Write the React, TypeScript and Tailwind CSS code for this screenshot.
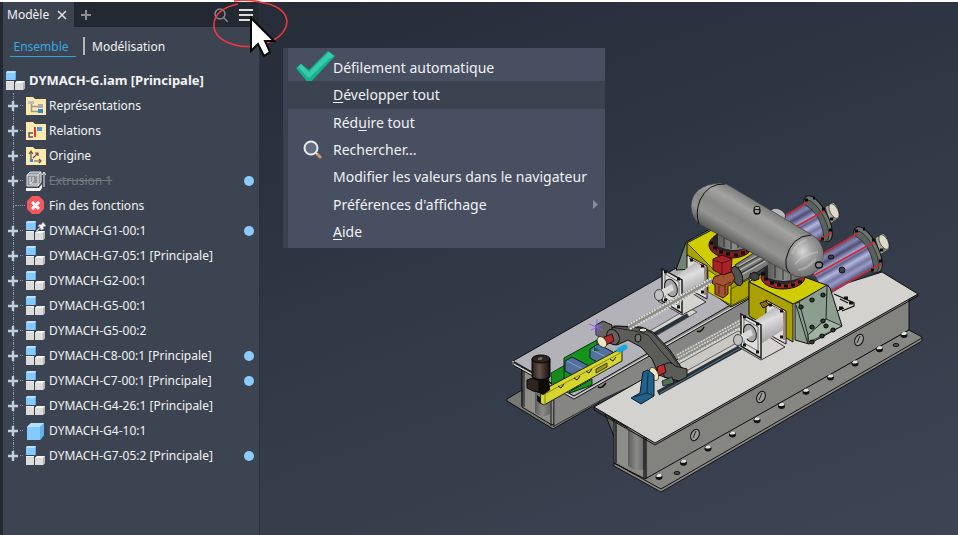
import { useState } from 'react';
import type { ReactNode } from 'react';

type IconKind = 'views' | 'relations' | 'origin' | 'extrusion' | 'end' | 'pinned' | 'assembly' | 'part';

type TreeNode = {
  label: string;
  icon: IconKind;
  dot?: boolean;
  leaf?: boolean;
  disabled?: boolean;
};

const nodes: TreeNode[] = [
  { label: 'Représentations', icon: 'views' },
  { label: 'Relations', icon: 'relations' },
  { label: 'Origine', icon: 'origin' },
  { label: 'Extrusion 1', icon: 'extrusion', dot: true, disabled: true },
  { label: 'Fin des fonctions', icon: 'end', leaf: true },
  { label: 'DYMACH-G1-00:1', icon: 'pinned', dot: true },
  { label: 'DYMACH-G7-05:1 [Principale]', icon: 'assembly' },
  { label: 'DYMACH-G2-00:1', icon: 'assembly' },
  { label: 'DYMACH-G5-00:1', icon: 'assembly' },
  { label: 'DYMACH-G5-00:2', icon: 'assembly' },
  { label: 'DYMACH-C8-00:1 [Principale]', icon: 'assembly', dot: true },
  { label: 'DYMACH-C7-00:1 [Principale]', icon: 'assembly', dot: true },
  { label: 'DYMACH-G4-26:1 [Principale]', icon: 'assembly' },
  { label: 'DYMACH-G4-10:1', icon: 'part' },
  { label: 'DYMACH-G7-05:2 [Principale]', icon: 'assembly', dot: true },
];

function Cubes() {
  return (
    <>
      <path d="M0 2 1 0h9v8l-1 1H0z" fill="#84caff" />
      <path d="M0 2 1 0h9L9 2z" fill="#b9e1ff" />
      <path d="M9 2l1-2v8l-1 1z" fill="#5caeea" />
      <path d="M0 11h8v8H0z" fill="#dcdcdc" />
      <path d="M0 10h8v1H0z" fill="#f4f4f4" />
      <path d="M9 12l2-2h8v7l-2 2H9z" fill="#dcdcdc" />
      <path d="M9 12l2-2h8l-2 2z" fill="#f8f8f8" />
      <path d="M17 12l2-2v7l-2 2z" fill="#b4b4b4" />
    </>
  );
}

function Folder({ children }: { children: ReactNode }) {
  return (
    <>
      <path d="M0 1h7l2 2h11v16H0z" fill="#fde9ae" />
      {children}
    </>
  );
}

function NodeIcon({ kind }: { kind: IconKind }) {
  return (
    <svg width="20" height="20" viewBox="0 0 20 20" className="shrink-0" aria-hidden="true">
      {kind === 'views' && (
        <Folder>
          <path d="M5.5 7v8.500H12M5.500 10.500H12" fill="none" stroke="#9a988e" strokeWidth="1.5" />
          <path d="M2 5h6v3H2z" fill="#b9bcc4" />
          <path d="M12 8h5v4h-5z" fill="#a7abb5" />
          <path d="M12 13h5v4h-5z" fill="#2f86cf" />
        </Folder>
      )}
      {kind === 'relations' && (
        <Folder>
          <path d="M8 6h2v10H8z" fill="#e23b33" />
          <path d="M11 6h5v4h-5z" fill="#3f94da" />
          <path d="M7 12H3v4h4" fill="none" stroke="#55585e" strokeWidth="1.5" />
        </Folder>
      )}
      {kind === 'origin' && (
        <Folder>
          <path d="M5 13V6M3 8l2-3 2 3M7 12l5-5M9 7h3v3M8 15h7M13 13l2 2-2 2" fill="none" stroke="#5f594b" strokeWidth="1.2" />
          <path d="M4 13h3v3H4z" fill="#2390e0" />
        </Folder>
      )}
      {kind === 'extrusion' && (
        <>
          <path d="M1 4 4 1h11v10l-3 4H1z" fill="#8f949c" stroke="#e2e2e2" />
          <path d="M1 4h11v11M12 4l3-3M4 6v7h7M4 13l3-3V6" fill="none" stroke="#e8e8e8" />
          <path d="M0 17h13l3-4v4l-2 3H0z" fill="#f5f5f5" />
          <path d="M18 16V2M16 4l2-3 2 3" fill="none" stroke="#ececec" />
        </>
      )}
      {kind === 'end' && (
        <>
          <path d="M6 0h7l5 5v8l-5 5H6l-5-5V5z" fill="#f4585c" />
          <path d="M6 6l7 7M13 6l-7 7" stroke="#fff" strokeWidth="3" />
        </>
      )}
      {kind === 'assembly' && <Cubes />}
      {kind === 'pinned' && (
        <>
          <Cubes />
          <path d="M10 10l4-4-2-1 2-2 1 1 2-3 3 4-3 1 1 2-3 1-1-2-3 4z" fill="#f1f1f1" stroke="#8d939c" strokeWidth="0.5" />
        </>
      )}
      {kind === 'part' && (
        <>
          <path d="M1 6l4-4h13v12l-4 5H1z" fill="#84caff" />
          <path d="M1 6l4-4h13l-4 4z" fill="#b8e0ff" />
          <path d="M14 6l4-4v12l-4 5z" fill="#5fb2ee" />
        </>
      )}
    </svg>
  );
}

function TreeRow({ node, last }: { node: TreeNode; last: boolean }) {
  return (
    <li className="flex h-[25px] items-center pl-1">
      <div className="flex h-full w-3 flex-col items-center">
        <span className="flex-1 border-l border-dotted border-[#8f98a5]" />
        {!node.leaf && (
          <button type="button" aria-label={`Développer ${node.label}`} className="block">
            <svg width="10" height="10" viewBox="0 0 10 10">
              <path d="M5 0v10M0 5h10" stroke="#c3cfdd" strokeWidth="2.4" />
            </svg>
          </button>
        )}
        {!last && <span className="flex-1 border-l border-dotted border-[#8f98a5]" />}
        {last && <span className="flex-1" />}
      </div>
      <span className={node.leaf ? 'mr-px -ml-1 w-[10px] border-t border-dotted border-[#8f98a5]' : 'mr-[3px] ml-px w-[3px] border-t border-dotted border-[#8f98a5]'} />
      <NodeIcon kind={node.icon} />
      <span className={node.disabled ? 'ml-[3px] text-[#757b80] line-through' : 'ml-[3px]'}>{node.label}</span>
      {node.dot && <span className="mr-[5px] ml-auto size-[10px] rounded-full bg-[#8bcbff]" />}
    </li>
  );
}

function BrowserPanel({ onMenu }: { onMenu: () => void }) {
  return (
    <aside className="flex w-[260px] shrink-0 flex-col border-r border-l-3 border-r-[#2b323e] border-l-[#222933] bg-[#3c4452] text-xs text-[#f2f2f2]">
      <div className="flex h-[25px] items-center bg-[#232932]">
        <div className="flex h-full w-[71px] items-center gap-2 bg-[#3c4452] pl-1">
          <span>Modèle</span>
          <button type="button" aria-label="Fermer">
            <svg width="10" height="10" viewBox="0 0 10 10">
              <path d="M1 1l8 8M9 1L1 9" stroke="#e0e0e0" strokeWidth="1.5" />
            </svg>
          </button>
        </div>
        <button type="button" aria-label="Ajouter" className="ml-[7px]">
          <svg width="10" height="10" viewBox="0 0 10 10">
            <path d="M5 0v10M0 5h10" stroke="#8f8f8f" strokeWidth="2" />
          </svg>
        </button>
        <button type="button" aria-label="Rechercher" className="ml-auto">
          <svg width="14" height="14" viewBox="0 0 14 14">
            <circle cx="6" cy="6" r="5" fill="none" stroke="#85898f" strokeWidth="1.5" />
            <path d="M9.5 9.5L14 14" stroke="#85898f" strokeWidth="1.5" />
          </svg>
        </button>
        <button type="button" aria-label="Menu" className="mr-[6px] ml-[11px]" onClick={onMenu}>
          <svg width="14" height="14" viewBox="0 0 14 14">
            <path d="M0 2h14M0 7h14M0 12h14" stroke="#dcdcdc" strokeWidth="2" />
          </svg>
        </button>
      </div>

      <div className="mt-[10px] flex h-5 items-start pl-[7px]">
        <button type="button" className="h-5 w-[66px] border-b border-[#2fa3dc] pr-1 text-[#35a9e1]">
          Ensemble
        </button>
        <span className="mx-[7px] h-[18px] w-[2px] bg-[#b3b6ba]" />
        <button type="button" className="h-5">
          Modélisation
        </button>
      </div>

      <div className="mt-[11px] flex h-[25px] items-center gap-[3px] pl-[3px] text-[13px] font-bold">
        <NodeIcon kind="assembly" />
        <span>DYMACH-G.iam [Principale]</span>
      </div>
      <ul>
        {nodes.map((node, i) => (
          <TreeRow key={node.label} node={node} last={i === nodes.length - 1} />
        ))}
      </ul>
    </aside>
  );
}

function MenuItem({ children, icon, active, arrow }: { children: ReactNode; icon?: ReactNode; active?: boolean; arrow?: boolean }) {
  return (
    <li className={active ? 'flex flex-1 bg-[#3b4350]' : 'flex flex-1'}>
      <button type="button" role="menuitem" className="flex w-full items-center pr-[7px] text-left">
        <span className="flex w-[45px] shrink-0 items-center pl-2">{icon}</span>
        <span className="whitespace-nowrap">{children}</span>
        {arrow && (
          <svg width="5" height="9" viewBox="0 0 5 9" className="ml-auto">
            <path d="M0 0l5 4.5L0 9z" fill="#8290a5" />
          </svg>
        )}
      </button>
    </li>
  );
}

function ContextMenu() {
  return (
    <div className="absolute top-12 left-[283px] w-[322px] bg-[#3a4252] pl-[5px]">
      <ul role="menu" className="flex h-[200px] flex-col bg-[#474f61] pt-[6px] pb-[2px] text-sm text-[#f0f1f3]">
        <MenuItem
          icon={
            <svg width="40" height="34" viewBox="0 0 40 34" className="-my-4 shrink-0">
              <path d="M0 17l5-4 8 6L32 0l7 5-26 28z" fill="#12b390" />
              <path d="M2 16l3-3 8 8L33 1l5 4-5 3-20 19z" fill="#38cba9" />
            </svg>
          }
        >
          Défilement automatique
        </MenuItem>
        <MenuItem active>
          <u className="underline-offset-2">D</u>évelopper tout
        </MenuItem>
        <MenuItem>
          Réd<u className="underline-offset-2">u</u>ire tout
        </MenuItem>
        <MenuItem
          icon={
            <svg width="20" height="20" viewBox="0 0 20 20" className="ml-[7px] shrink-0">
              <circle cx="8" cy="8" r="6.5" fill="#646d80" stroke="#e9ecef" strokeWidth="2" />
              <path d="M13 13l2 2" stroke="#dfe2e6" strokeWidth="2" />
              <path d="M14 14l4 4" stroke="#c99a62" strokeWidth="3" />
            </svg>
          }
        >
          Rechercher...
        </MenuItem>
        <MenuItem>Modifier les valeurs dans le navigateur</MenuItem>
        <MenuItem arrow>Préférences d'affichage</MenuItem>
        <MenuItem>
          <u className="underline-offset-2">A</u>ide
        </MenuItem>
      </ul>
    </div>
  );
}

// Hand drawn circle and oversized pointer over the menu button
function Pointer() {
  return (
    <svg width="80" height="60" viewBox="210 0 80 60" className="pointer-events-none absolute top-0 left-[210px]" aria-hidden="true">
      <path d="M234 1Q246 -1 260 2Q285 6 287 21Q286 36 267 43Q246 50 229 43Q213 36 214 24Q215 9 238 4" fill="none" stroke="#f0393d" strokeWidth="1.6" />
      <path d="M251 18V51l7-7 6 12 6-4-5-11h9z" fill="#fff" stroke="#0a0a0a" strokeWidth="2" />
    </svg>
  );
}

const flangeBolts = Array.from({ length: 11 }, (_, i) => ({ x: 659 + i * 24.5, y: 476 - i * 14.2 }));
const webHoles = [[695, 435], [761, 397], [859, 340]];
const nearRingBolts = [[763, 275], [766, 280], [772, 284], [779, 286], [786, 287], [793, 286], [800, 283]];
const farRingBolts = [[711, 243], [715, 248], [721, 252], [728, 254], [736, 255], [743, 253], [748, 250]];
const gussetBolts = [[801, 307], [812, 300], [823, 295], [812, 327], [823, 321], [826, 326], [833, 330], [812, 342], [822, 336]];

function Clamp({ x, y }: { x: number; y: number }) {
  return (
    <g transform={`translate(${x} ${y})`}>
      <path d="M-4 32l24 14 24-13-22-14z" fill="#d6d4d0" stroke="#111" strokeWidth="0.8" />
      <path d="M25-14l20 11v33l-20-11z" fill="#dddbd8" stroke="#111" />
      <path d="M27-11l16 9v28" fill="none" stroke="#6b3527" />
      <path d="M8 11l26-18q10 4 8 23L18 31z" fill="url(#steel)" />
      <path d="M0 0l20 11v33L0 32z" fill="#dedede" stroke="#111" strokeWidth="1.4" />
      <path d="M3 5l14 8v24L3 29z" fill="none" stroke="#333" strokeWidth="0.7" />
      <ellipse cx="9" cy="19" rx="6" ry="9" fill="#a5a5a5" stroke="#111" transform="rotate(-20 9 19)" />
      <path d="M-3 22l13-7 2 6-13 8z" fill="#d9d9d9" />
      <ellipse cx="-3" cy="26" rx="4.5" ry="5.5" fill="#bfbfbf" stroke="#222" strokeWidth="0.8" />
      <path d="M2 3h3M15 10h3M2 31h3M15 38h3M28-9h3M39-3h3M39 23h3" stroke="#111" strokeWidth="3" />
    </g>
  );
}

// Tie-rod cylinder with its end flange and nose
function Ram({ x, y }: { x: number; y: number }) {
  return (
    <g transform={`translate(${x} ${y})`}>
      <path d="M8-12l8-5q7 5 6 16l-9 6z" fill="#a9a69c" stroke="#222" strokeWidth="0.8" />
      <path d="M11-14q6 5 6 16" fill="none" stroke="#55534e" />
      <ellipse cx="17" cy="-8" rx="4" ry="8" transform="rotate(-27 17 -8)" fill="#ddd9cb" stroke="#222" strokeWidth="0.6" />
      <ellipse cx="1" cy="0" rx="10" ry="25" transform="rotate(-27)" fill="#6c746f" stroke="#101010" />
      <ellipse cx="-2" cy="1" rx="9" ry="23" transform="rotate(-27)" fill="#59615d" stroke="#222" strokeWidth="0.7" />
      <path d="M-60 12L-13-15Q4-6 7 18L-40 46z" fill="url(#blueSteel)" />
      <path d="M-13-15Q4-6 7 18" fill="none" stroke="#222" strokeWidth="0.8" />
      <path d="M-46 5L-9-17M-54 26L7-8M-37 42L14 14" fill="none" stroke="#cb2633" strokeWidth="1.6" />
      <path d="M-12-19h3M5-10h3M12 11h3M4 20h3M-4-21h2M13 0h3" stroke="#0a0a0a" strokeWidth="3" />
    </g>
  );
}

function MachineModel() {
  return (
    <svg width="418" height="312" viewBox="506 181 418 312" role="img" aria-label="Modèle 3D DYMACH-G" className="shrink-0">
      <defs>
        <linearGradient id="tank" gradientUnits="userSpaceOnUse" x1="770" y1="208" x2="745" y2="250">
          <stop offset="0" stopColor="#777776" />
          <stop offset="0.25" stopColor="#a3a3a1" />
          <stop offset="0.5" stopColor="#888886" />
          <stop offset="0.75" stopColor="#949492" />
          <stop offset="1" stopColor="#5c5c5b" />
        </linearGradient>
        <radialGradient id="cap" cx="0.45" cy="0.4" r="0.6">
          <stop offset="0" stopColor="#d8d8d8" />
          <stop offset="0.45" stopColor="#a0a0a0" />
          <stop offset="1" stopColor="#747474" />
        </radialGradient>
        <linearGradient id="steel" x1="0.3" y1="0" x2="0.7" y2="1">
          <stop offset="0" stopColor="#9c9c9c" />
          <stop offset="0.4" stopColor="#dedede" />
          <stop offset="1" stopColor="#909090" />
        </linearGradient>
        <linearGradient id="blueSteel" gradientUnits="userSpaceOnUse" x1="-33" y1="-4" x2="-14" y2="29">
          <stop offset="0" stopColor="#4f5174" />
          <stop offset="0.15" stopColor="#8386b4" />
          <stop offset="0.25" stopColor="#4c4e72" />
          <stop offset="0.4" stopColor="#a9abd8" />
          <stop offset="0.5" stopColor="#5d6088" />
          <stop offset="0.62" stopColor="#b4b6e0" />
          <stop offset="0.75" stopColor="#74779f" />
          <stop offset="0.85" stopColor="#9a9cc8" />
          <stop offset="1" stopColor="#55587e" />
        </linearGradient>
        <linearGradient id="column" x1="0" x2="1">
          <stop offset="0" stopColor="#5d5d5b" />
          <stop offset="0.5" stopColor="#8a8a88" />
          <stop offset="1" stopColor="#666" />
        </linearGradient>
        <linearGradient id="motor" x1="0" x2="1">
          <stop offset="0" stopColor="#241c19" />
          <stop offset="0.4" stopColor="#66534a" />
          <stop offset="1" stopColor="#110e0c" />
        </linearGradient>
      </defs>

      {/* far beam */}
      <path d="M507 399l15-9 70 5 8 7-47 27-46-28z" fill="#777773" stroke="#111" />
      <path d="M522 367l52 30v18l-22 10-30-18z" fill="#8d8d8a" stroke="#111" />
      <path d="M535 385h15v29q-8 5-15-1z" fill="url(#column)" />
      <path d="M522 368v38M524 369v38M551 396v30M554 396v31" stroke="#111" />
      <path d="M554 388l206-110v48L603 399l-49 27z" fill="#858583" stroke="#222" strokeWidth="0.8" />
      <path d="M513 361l165-94 85 8v11L574 396z" fill="#b3b2b8" stroke="#111" />
      <path d="M513 361v3l61 34L763 290" fill="none" stroke="#d7d7d7" strokeWidth="1.5" />
      <path d="M513 362v3l61 34L763 291" fill="none" stroke="#111" />
      <path d="M598 387q4 2 8-4M697 331q4 2 7-4" fill="none" stroke="#111" strokeWidth="1.5" />
      <path d="M643 335l46-27 8 4-48 28z" fill="#d5d4ce" stroke="#333" strokeWidth="0.7" />
      <path d="M646 339l42-24" stroke="#29343a" strokeWidth="4" />

      {/* near beam */}
      <path d="M605 414l10 25v-18z" fill="#5f5f5d" stroke="#111" />
      <path d="M614 420l31 18 264-145v37L645 480l-31-17z" fill="#82827f" stroke="#111" />
      <path d="M616 423l29 16v38l-29-15z" fill="#8c8c89" />
      <path d="M628 428h17v41q-9 4-17-3z" fill="url(#column)" />
      <path d="M614 463l31 16 264-149 13 7v4L661 492l-47-26z" fill="#868683" stroke="#111" />
      <path d="M614 463l47 26 261-151" fill="none" stroke="#111" />
      <path d="M616 422v41M644 437v41M646 437v42" stroke="#111" strokeWidth="1.3" />
      <path d="M594 407L768 308l114-36 36 22-263 149z" fill="#d4d2ce" stroke="#111" />
      <path d="M594 407v3l61 35 263-149v-2" fill="none" stroke="#111" />
      {webHoles.map(([x, y]) => (
        <g key={x}>
          <ellipse cx={x} cy={y} rx="4" ry="6" transform={`rotate(25 ${x} ${y})`} fill="#9b9b98" stroke="#111" />
          <path d={`M${x - 2} ${y + 3}l3-7`} stroke="#222" />
        </g>
      ))}
      {flangeBolts.map(({ x, y }) => (
        <g key={x}>
          <ellipse cx={x} cy={y + 1} rx="3.5" ry="3" fill="#111" />
          <path d={`M${x - 3} ${y}l2-2h3l1 2-2 1h-3z`} fill="#e2e2e2" />
        </g>
      ))}
      <ellipse cx="677" cy="473" rx="3" ry="1.5" fill="#555" stroke="#111" />
      <ellipse cx="896" cy="345" rx="3" ry="1.5" fill="#555" stroke="#111" />

      {/* drive unit on the far beam */}
      <path d="M551 373l14-8 14 24-27 2z" fill="#178b1b" stroke="#0b2e0c" strokeWidth="0.8" />
      <path d="M564 358l33-18v33l-33 7z" fill="#15931a" stroke="#0b2e0c" />
      <path d="M569 392l23-13v6l-22 8z" fill="#15931a" stroke="#0b2e0c" />
      <path d="M548 391l77-43" stroke="#18a6dd" strokeWidth="4" />
      <path d="M590 349l8-5 15 8v6l-12 6-11-6z" fill="#52719e" stroke="#121b2a" />
      <path d="M565 361l7-4 17 9v6l-14 4-10-5z" fill="#52719e" stroke="#121b2a" />
      <path d="M567 361l20 10M592 350l18 9" stroke="#86a0c8" />
      <path d="M541 391l81-43v13l-78 44-4-2z" fill="#d6d52c" stroke="#222" />
      <path d="M541 392l4 2v11M545 394l77-42" fill="none" stroke="#777411" strokeWidth="0.8" />
      <path d="M596 369l11-6v4l-11 6z" fill="#99981b" stroke="#222" strokeWidth="0.8" />
      <path d="M558 386l3 2 3-4M574 378l3 2 3-4M586 371l3 2 3-4M610 359l3 2 3-4" fill="none" stroke="#111" />
      <path d="M534 376h15l1 14-7 5-8-4z" fill="#0f0c0b" />
      <path d="M532 359h18v18q-9 5-18 0z" fill="url(#motor)" stroke="#050505" />
      <ellipse cx="541" cy="359" rx="9" ry="4" fill="#2d2420" stroke="#050505" />
      <path d="M538 358l3-1 2 1-2 2h-3z" fill="#78655b" />
      <path d="M527 380l6-2 6 3v11l-6-1-6-3z" fill="#2e2521" stroke="#050505" />
      <path d="M537 395l4 3v6l-4-3z" fill="#111" />
      <path d="M619 350l6-3" stroke="#18a6dd" strokeWidth="5" strokeLinecap="round" />

      {/* carriage guides on the near beam */}
      <path d="M683 373l66-37-11-5-61 34z" fill="#c9c8c2" stroke="#333" strokeWidth="0.7" />
      <path d="M658 393l83-46" stroke="#27333a" strokeWidth="5" />
      <path d="M660 393l80-45" stroke="#61717a" />
      <path d="M677 358l91-50" stroke="#8b8b88" strokeWidth="8" />
      <path d="M677 355l91-50M678 358l90-50M680 361l88-49" stroke="#d9d9d4" strokeWidth="1.5" strokeDasharray="2 1" />

      {/* swing arm */}
      <path d="M606 342q-2-13 10-16l25 1 12 5 17 18 11 17 4 3v7l-8 5-18-7-7-16-11-12-13-7-11 5z" fill="#5c5c59" stroke="#101010" />
      <path d="M610 327l25 4 13 4 13 16 9 10 9 10M613 326l28 2 11 5 17 18 9 14" fill="none" stroke="#161616" strokeWidth="0.8" />
      <path d="M596 325l7-4 9 4v11l-8 3-8-4z" fill="#656562" stroke="#111" />
      <ellipse cx="613" cy="337" rx="6" ry="8" transform="rotate(-25 613 337)" fill="#626260" stroke="#111" />
      <ellipse cx="638" cy="338" rx="3" ry="4" fill="#72726e" stroke="#111" />
      <ellipse cx="643" cy="330" rx="4" ry="2" fill="#deddd8" stroke="#111" />
      <path d="M604 337l8-3 2 7-8 4z" fill="#b02a2e" stroke="#34090b" />
      <ellipse cx="602" cy="342" rx="4" ry="6" transform="rotate(-35 602 342)" fill="#efe5be" stroke="#222" strokeWidth="0.7" />
      <path d="M594 347l6 4h-6z" fill="#0b6827" />
      <path d="M663 365q8-5 12 1l12 3v8l-8 4-15-4z" fill="#5c5c59" stroke="#111" />
      <path d="M657 367l7-3 2 8-8 4z" fill="#bb2d30" stroke="#34090b" />
      <ellipse cx="654" cy="374" rx="4" ry="7" transform="rotate(-25 654 374)" fill="#efe5be" stroke="#222" strokeWidth="0.7" />
      <path d="M662 381l10-4 2 6-11 3z" fill="#52705f" stroke="#111" strokeWidth="0.8" />
      <path d="M643 372l5-2 6 5v21l-13 8-10-6 9-5z" fill="#22618a" stroke="#071b28" />
      <path d="M648 373l-1 20-13 4M647 393l7 3" fill="none" stroke="#0d3148" />
      <path d="M589 324l14 6M597 319v17M591 330l11-5" stroke="#8c5cff" strokeWidth="0.9" />

      {/* far head */}
      <path d="M676 270l10-28 26-14 8 30-17 23-9-12z" fill="#718373" stroke="#111" />
      <path d="M687 243l25-13 46 16-9 28v24l-18 9-24-18v-22l-20-10z" fill="#a9a000" stroke="#111" />
      <path d="M687 243l25-13 48 23-15 14-32 2z" fill="#cfcc00" stroke="#111" strokeWidth="0.7" />
      <path d="M708 270l23 15v20l-23-13z" fill="#d0cc00" stroke="#222" strokeWidth="0.7" />
      <path d="M731 289l18-10v17l-18 10z" fill="#aaa300" stroke="#222" strokeWidth="0.7" />
      <ellipse cx="731" cy="245" rx="22" ry="13" fill="#7a1e22" stroke="#170506" />
      <ellipse cx="731" cy="241" rx="19" ry="11" fill="#242424" />
      <path d="M718 226h32v20q-16 8-32 0z" fill="url(#column)" />
      <path d="M724 230v17M731 230v19M738 230v18" stroke="#262626" />
      {farRingBolts.map(([x, y]) => (
        <path key={x} d={`M${x - 2} ${y}h4`} stroke="#090909" strokeWidth="3" />
      ))}
      <path d="M735 265l28-18 13 13-34 22z" fill="#777775" stroke="#222" />
      <path d="M739 266l28-16M740 270l30-17M741 275l31-18" stroke="#b8b8b3" strokeWidth="1.3" />
      <path d="M738 268l28-16M741 273l30-17" stroke="#393938" strokeWidth="1.2" />

      <Clamp x={662} y={269} />
      <path d="M628 327l84-47" stroke="#8b8b88" strokeWidth="6" />
      <path d="M628 325l84-47M630 329l82-46" stroke="#deded9" strokeWidth="2" strokeDasharray="2 1" />

      <ellipse cx="737" cy="276" rx="5" ry="10" transform="rotate(-20 737 276)" fill="#4f5351" stroke="#111" />
      <path d="M714 277l8-3 10-2 3 6-3 6-4 2v8l-5 4-8-4v-9l-3-2z" fill="#a15232" stroke="#32170c" />
      <path d="M715 283l8 3 8-4M719 286v8M725 286v9" fill="none" stroke="#54210f" />
      <path d="M713 259l9-4 10 4-1 13-8 3-10-5z" fill="#a92227" stroke="#39090c" />
      <path d="M713 260l9 3 9-3M722 263v11" fill="none" stroke="#5c1115" />

      {/* rams and accumulator */}
      <Ram x={817} y={219} />
      <Ram x={867} y={250} />
      <ellipse cx="778" cy="214" rx="8" ry="5" transform="rotate(25 778 214)" fill="#b7b7bd" stroke="#222" strokeWidth="0.7" />
      <ellipse cx="831" cy="257" rx="3" ry="2" fill="#3b4150" stroke="#111" />
      <ellipse cx="842" cy="270" rx="3" ry="3" fill="#3b4150" stroke="#111" />

      {/* near head */}
      <path d="M749 282l25-16 55 20-36 18z" fill="#cfcc00" stroke="#111" />
      <path d="M749 282l44 22v38l-44-26z" fill="#aaa000" stroke="#111" />
      <path d="M827 285l3 3 12 38-33 18-14-4V304z" fill="#8c9e8e" stroke="#111" />
      <path d="M827 286l-1 33-18 16-9-33M808 335v9M826 319l16 8M796 305l12 39" fill="none" stroke="#1b241c" />
      <path d="M826 319l16 7-33 16-1-7z" fill="#a1b2a1" stroke="#111" strokeWidth="0.7" />
      {gussetBolts.map(([x, y]) => (
        <ellipse key={`${x}-${y}`} cx={x} cy={y} rx="2.2" ry="2" fill="#303b35" stroke="#060606" />
      ))}
      <ellipse cx="783" cy="277" rx="22" ry="12" fill="#98252a" stroke="#170506" />
      <ellipse cx="783" cy="273" rx="20" ry="11" fill="#252525" />
      <path d="M768 256h32v22q-16 6-32 0z" fill="url(#column)" />
      <path d="M775 260v18M783 262v18M791 263v17" stroke="#2a2a2a" />
      {nearRingBolts.map(([x, y]) => (
        <path key={x} d={`M${x - 2} ${y - 1}h4`} stroke="#090909" strokeWidth="3" />
      ))}
      <path d="M750 274l5-2 4 3v4l-5 2-4-3z" fill="#3e403e" stroke="#111" />
      <path d="M834 294l20 9v3l-12 5M840 299l8 4M837 311l7-3" fill="none" stroke="#111" strokeWidth="1.2" />
      <path d="M844 298h4M849 303h4M839 308h4" stroke="#111" strokeWidth="3" />

      <path d="M720 183q6 0 10 3l82 49q12 7 11 22-2 17-20 20-8 1-14-4l-90-49q-8-7-8-18 1-21 29-23z" fill="url(#tank)" stroke="#3d3d3d" strokeWidth="0.7" />
      <path d="M810 235q-20 1-24 25-1 10 4 13 12 7 24-1 8-6 9-15 1-15-13-22z" fill="url(#cap)" />
      <path d="M811 235q-20 1-25 24-1 11 4 14M725 184q-17-1-25 16-5 13-1 24" fill="none" stroke="#111" />
      <path d="M792 254q4-11 14-14M795 264q9-10 23-12M798 270q8 0 18-11" fill="none" stroke="#d5d5d5" opacity="0.4" strokeWidth="2" />
      <ellipse cx="757" cy="211" rx="3" ry="3" fill="#999" stroke="#0d0d0d" strokeWidth="1.3" />
      <ellipse cx="757" cy="208" rx="3" ry="1.5" fill="#bbb" stroke="#0d0d0d" />
      <ellipse cx="819" cy="265" rx="3.5" ry="3" fill="#888" stroke="#111" strokeWidth="1.3" />

      <Clamp x={741} y={314} />
      <path d="M760 303l6-2 3 4-6 3z" fill="#8f6917" stroke="#1d1605" />
    </svg>
  );
}

export default function App() {
  const [open, setOpen] = useState(true);

  return (
    <main className="relative flex min-h-screen border-t-2 border-white bg-[#333a47] font-['Noto_Sans',sans-serif]">
      <BrowserPanel onMenu={() => setOpen(!open)} />
      <section className="flex flex-1 justify-end bg-linear-160 from-[#262c38] via-[#323947] to-[#3e4453] pt-[179px] pr-[34px]">
        <MachineModel />
      </section>
      {open && (
        <div className="absolute -top-[2px] left-0">
          <ContextMenu />
        </div>
      )}
      <div className="absolute -top-[2px] left-0">
        <Pointer />
      </div>
    </main>
  );
}
